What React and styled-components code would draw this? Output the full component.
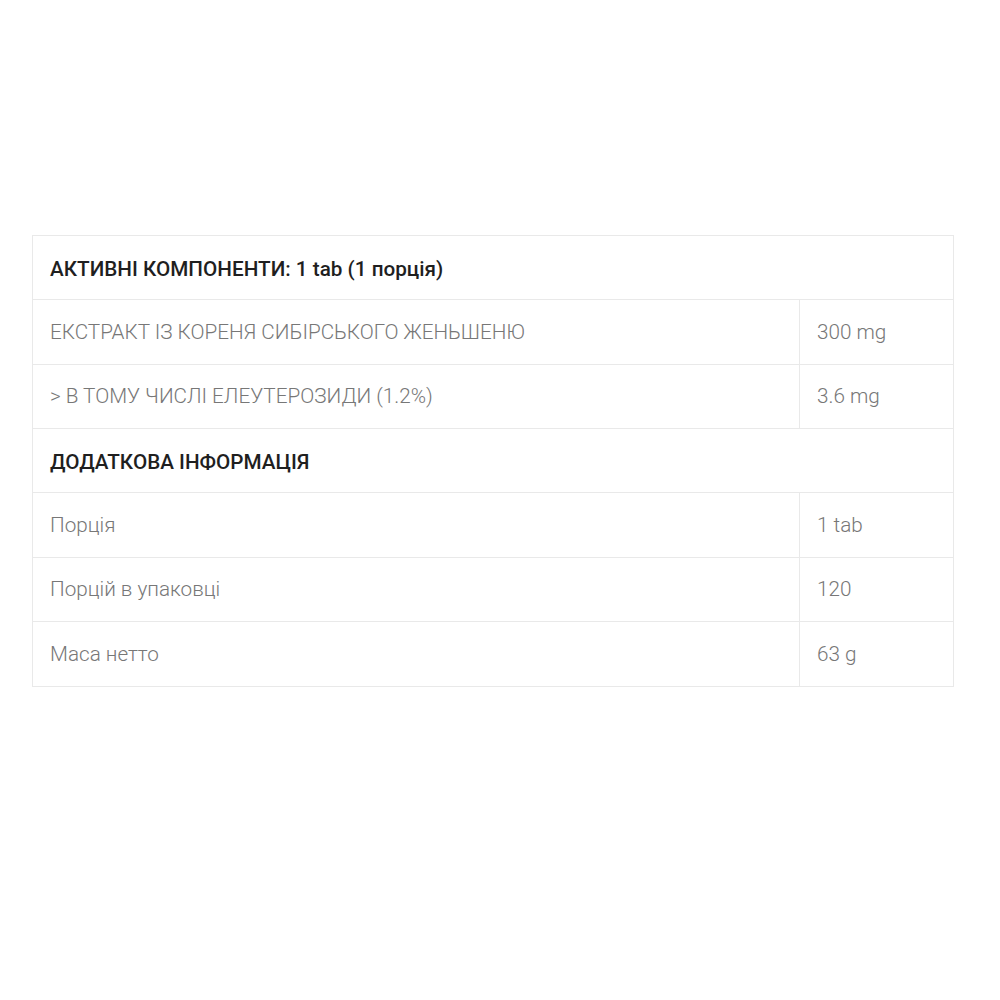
import React from 'react';
import styled, { createGlobalStyle } from 'styled-components';

const GlobalStyle = createGlobalStyle`
  html, body {
    margin: 0;
    padding: 0;
    background: #fff;
  }
  body {
    font-family: Roboto, "Liberation Sans", Arial, sans-serif;
  }
`;

const Page = styled.div`
  width: 1000px;
  height: 1000px;
  padding: 235px 0 0 32px;
  box-sizing: border-box;
`;

const Table = styled.table`
  width: 922px;
  border-collapse: collapse;
  table-layout: fixed;
`;

const HeadCell = styled.td`
  height: 64px;
  padding: 2px 17px 0;
  border: 1px solid #e9e9e9;
  font-size: 20.7px;
  font-weight: 500;
  color: #1f1f1f;
  box-sizing: border-box;
`;

const Cell = styled.td`
  height: 64.5px;
  padding: 0 17px;
  border: 1px solid #e9e9e9;
  font-size: 20.7px;
  font-weight: 300;
  color: #777;
  box-sizing: border-box;
`;

const sections = [
  {
    title: 'АКТИВНІ КОМПОНЕНТИ: 1 tab (1 порція)',
    rows: [
      ['ЕКСТРАКТ ІЗ КОРЕНЯ СИБІРСЬКОГО ЖЕНЬШЕНЮ', '300 mg'],
      ['> В ТОМУ ЧИСЛІ ЕЛЕУТЕРОЗИДИ (1.2%)', '3.6 mg'],
    ],
  },
  {
    title: 'ДОДАТКОВА ІНФОРМАЦІЯ',
    rows: [
      ['Порція', '1 tab'],
      ['Порцій в упаковці', '120'],
      ['Маса нетто', '63 g'],
    ],
  },
];

const App = () => (
  <Page>
    <GlobalStyle />
    <Table>
      <colgroup>
        <col />
        <col style={{ width: 154 }} />
      </colgroup>
      <tbody>
        {sections.map(section => (
          <React.Fragment key={section.title}>
            <tr>
              <HeadCell colSpan={2}>{section.title}</HeadCell>
            </tr>
            {section.rows.map(([name, value]) => (
              <tr key={name}>
                <Cell>{name}</Cell>
                <Cell>{value}</Cell>
              </tr>
            ))}
          </React.Fragment>
        ))}
      </tbody>
    </Table>
  </Page>
);

export default App;
